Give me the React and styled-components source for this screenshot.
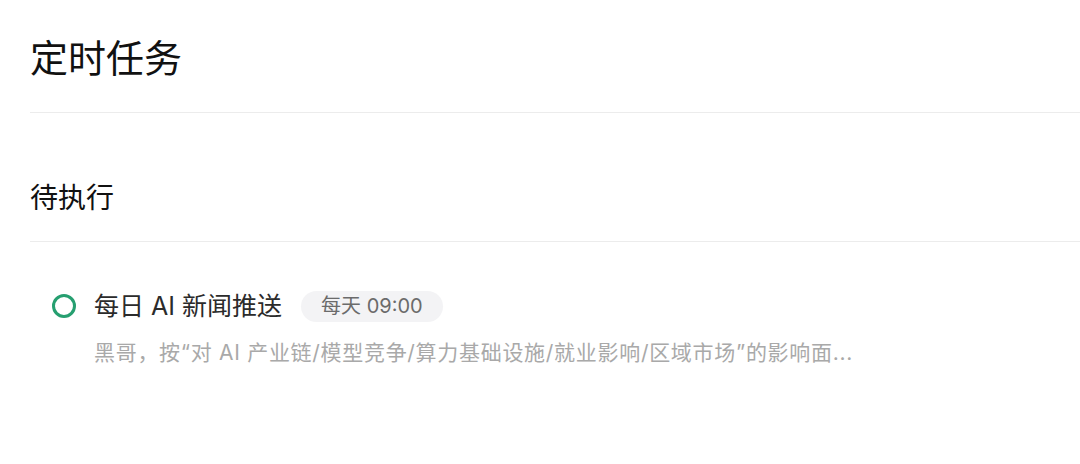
import React from 'react';
import styled, { createGlobalStyle } from 'styled-components';

const GlobalStyle = createGlobalStyle`
    body {
        margin: 0;
        background: #ffffff;
        font-family: Inter, "Noto Sans CJK SC", sans-serif;
    }
`;

const Page = styled.div`
    padding-left: 30px;
    width: 1050px;
`;

const Header = styled.div`
    height: 112px;
    display: flex;
    align-items: center;
    border-bottom: 1px solid #ececec;
`;

const Title = styled.h1`
    margin: 0;
    font-size: 38px;
    font-weight: 400;
    color: #111;
    line-height: 1;
    padding-top: 4px;
`;

const SectionHeader = styled.div`
    height: 128px;
    display: flex;
    align-items: center;
    border-bottom: 1px solid #ececec;
`;

const SectionTitle = styled.h2`
    margin: 0;
    font-size: 28px;
    font-weight: 400;
    color: #111;
    line-height: 1;
    padding-top: 42px;
`;

const TaskList = styled.div`
    padding-top: 48px;
`;

const Task = styled.div`
    display: grid;
    grid-template-columns: 64px 1fr;
    row-gap: 17px;
`;

const StatusRing = styled.span`
    width: 18px;
    height: 18px;
    border: 3px solid #269f70;
    border-radius: 50%;
    margin-left: 22px;
    align-self: center;
`;

const TaskHead = styled.div`
    display: flex;
    align-items: center;
    gap: 19px;
`;

const TaskName = styled.span`
    font-size: 25px;
    color: #2b2b2b;
    line-height: 32px;
`;

const Badge = styled.span`
    background: #f3f3f5;
    color: #6b6b6b;
    font-size: 20px;
    line-height: 31px;
    padding: 0 20px;
    border-radius: 16px;
`;

const TaskDesc = styled.div`
    grid-column: 2;
    font-size: 21px;
    letter-spacing: 0.7px;
    color: #a9a9a9;
    line-height: 28px;
`;

export default function App() {
    return (
        <>
            <GlobalStyle />
            <Page>
                <Header>
                    <Title>定时任务</Title>
                </Header>
                <SectionHeader>
                    <SectionTitle>待执行</SectionTitle>
                </SectionHeader>
                <TaskList>
                    <Task>
                        <StatusRing />
                        <TaskHead>
                            <TaskName>每日 AI 新闻推送</TaskName>
                            <Badge>每天 09:00</Badge>
                        </TaskHead>
                        <TaskDesc>黑哥，按“对 AI 产业链/模型竞争/算力基础设施/就业影响/区域市场”的影响面...</TaskDesc>
                    </Task>
                </TaskList>
            </Page>
        </>
    );
}
